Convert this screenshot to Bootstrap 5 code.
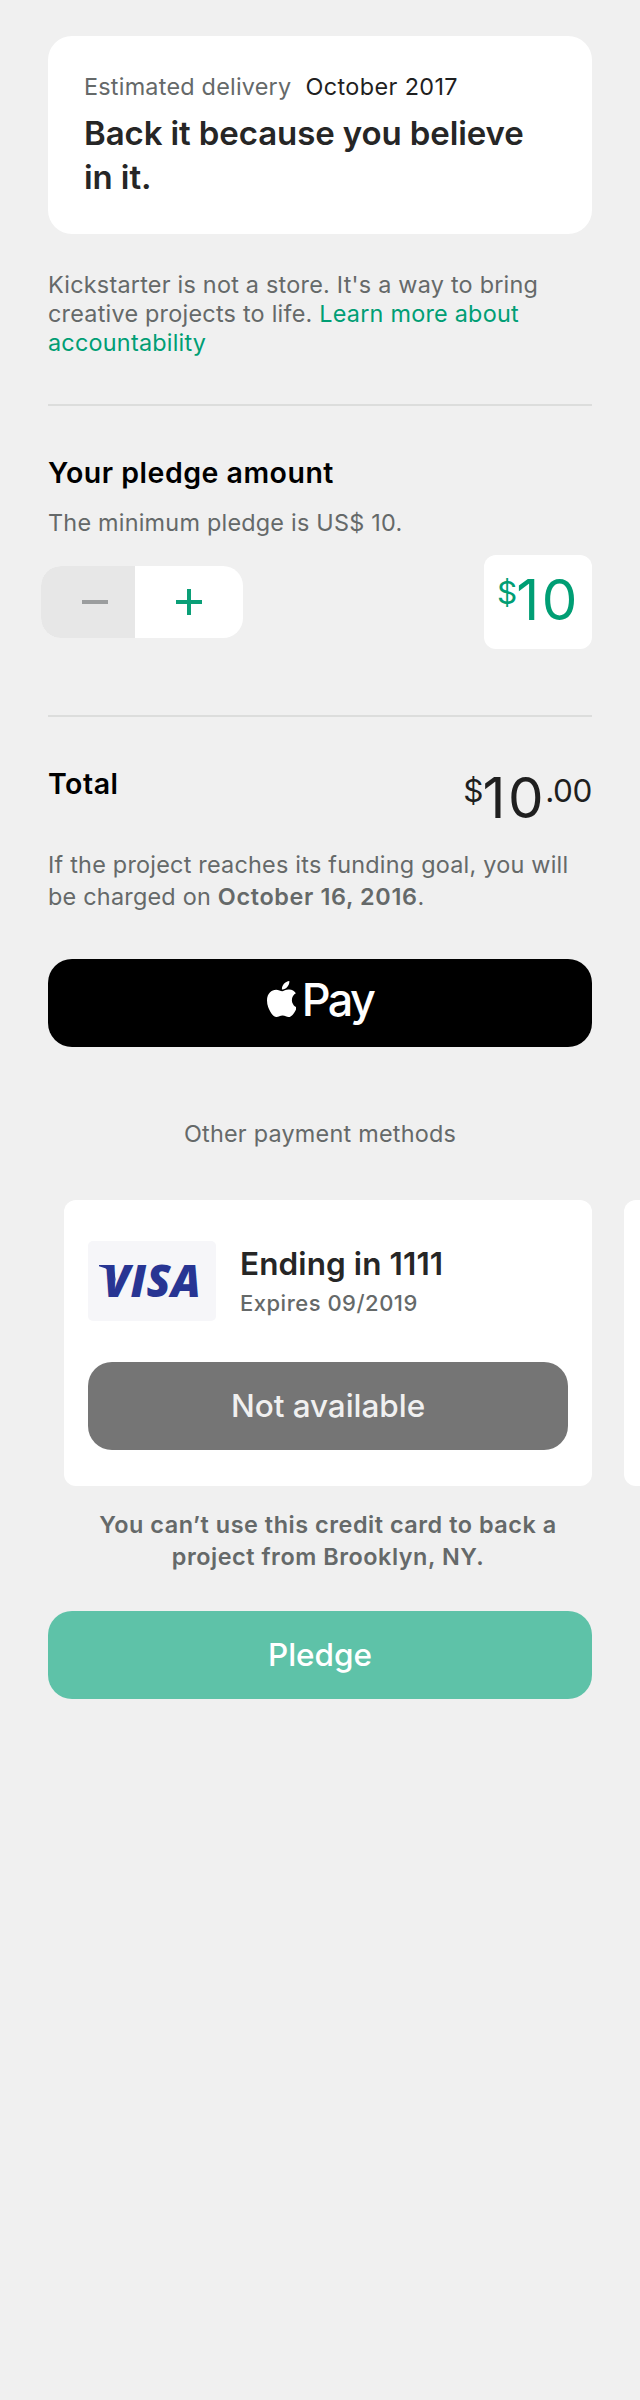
<!DOCTYPE html>
<html lang="en">
<head>
<meta charset="utf-8">
<meta name="viewport" content="width=device-width, initial-scale=1">
<title>Pledge</title>
<link rel="stylesheet" href="https://cdn.jsdelivr.net/npm/bootstrap@5.3.0/dist/css/bootstrap.min.css">
<style>
body{background:#f0f0f0;font-family:Inter,"Liberation Sans",sans-serif;color:#262626;min-height:2400px;overflow-x:hidden}
.page{padding:36px 48px 0}
.copy{font-size:23.4px;line-height:29px;letter-spacing:.23px;color:#656969;white-space:nowrap;margin:0}
.copy-loose{line-height:32px}
.ink{color:#1f1f1f}
.green{color:#009e74}
.reward{height:198px;border-radius:24px;padding:36px}
.reward-date{margin-left:14px;letter-spacing:.4px}
.reward h1{font-size:33px;line-height:44px;font-weight:600;letter-spacing:-.1px;margin:10px 0 0}
.disclaimer{margin-top:36px}
.rule{height:2px;background:#dcdddc}
.rule-first{margin-top:47px}
.rule-second{margin-top:66px}
h2{font-size:28.5px;line-height:34px;font-weight:600;letter-spacing:.5px;color:#000;margin:0}
.section-title{margin-top:50px}
.minimum,.amount-row{margin-top:18px}
.stepper{width:202px;height:72px;margin-left:-7px;border-radius:20px;overflow:hidden}
.stepper button{border:0;padding:0 0 0 41px;background:none;display:flex;align-items:center}
.stepper .step-minus{width:94px;background:#e7e7e7}
.amount-box{width:108px;height:94px;border-radius:12px;padding:17px 0 0 13px}
.fig{font-size:56.5px;line-height:56px;letter-spacing:2.5px;margin-left:-1px}
.sup-fig{font-size:31.5px;line-height:32px;margin-top:5px}
.cents{letter-spacing:-.4px;margin-left:-1px}
.total-row{height:82px;margin-top:50px}
.total-amount{margin-top:3px}
.deadline{letter-spacing:.65px}
.cta{height:88px;border-radius:24px;border:0;font-size:31.5px;line-height:44px;font-weight:500;letter-spacing:-.05px;width:100%;display:flex;align-items:center;justify-content:center;padding:0;color:#fff}
.pay-btn{background:#000;margin-top:46px;gap:6px}
.pay-btn svg{margin-bottom:8px}
.pay-word{font-size:45px;line-height:56px;font-weight:500;letter-spacing:-2.7px;margin-bottom:6px}
.other{margin-top:72px;text-align:center}
.card-strip{margin:52px -48px 0 16px;gap:32px;overflow:hidden}
.pay-card{flex:0 0 528px;height:286px;border-radius:12px;padding:41px 24px 0}
.brand-tile{width:128px;height:80px;border-radius:5px;background:#f6f6f9;position:relative}
.visa-word{position:absolute;left:15px;top:17px;font:italic 800 44px/44px "Open Sans",sans-serif;letter-spacing:.4px;color:#283593}
.visa-flick{position:absolute;left:11px;top:24px}
.card-info{margin-left:24px;padding-top:4px;white-space:nowrap}
.card-end{font-size:31.5px;line-height:37px;font-weight:600;letter-spacing:.1px}
.card-exp{font-size:22px;line-height:30px;font-weight:500;letter-spacing:.5px;color:#656969;margin-top:6px}
.unavailable{margin-top:41px;background:#757575;color:#f0f0f0}
.warning{margin:23px 0 0 16px;text-align:center;font-weight:600;letter-spacing:.54px}
.pledge-btn{margin-top:38px;background:#5ec2a8}
</style>
</head>
<body>
<main class="page">
  <section class="reward bg-white">
    <div class="copy">Estimated delivery<span class="ink reward-date">October 2017</span></div>
    <h1>Back it because you believe<br>in it.</h1>
  </section>
  <p class="copy disclaimer">Kickstarter is not a store. It's a way to bring<br>creative projects to life. <a class="green text-decoration-none">Learn more about<br>accountability</a></p>
  <div class="rule rule-first"></div>

  <h2 class="section-title">Your pledge amount</h2>
  <p class="copy minimum">The minimum pledge is US$ 10.</p>
  <div class="amount-row d-flex justify-content-between align-items-center">
    <div class="stepper d-flex bg-white">
      <button class="step-minus" aria-label="Decrease"><svg width="26" height="26"><path d="M0 13H26" stroke="#9b9d9e" stroke-width="4"/></svg></button>
      <button aria-label="Increase"><svg width="26" height="26"><path d="M0 13H26M13 0V26" stroke="#0a9f77" stroke-width="4"/></svg></button>
    </div>
    <div class="amount-box bg-white d-flex green"><span class="sup-fig">$</span><span class="fig">10</span></div>
  </div>
  <div class="rule rule-second"></div>

  <div class="total-row d-flex justify-content-between">
    <h2>Total</h2>
    <div class="total-amount d-flex ink"><span class="sup-fig">$</span><span class="fig">10</span><span class="sup-fig cents">.00</span></div>
  </div>
  <p class="copy copy-loose">If the project reaches its funding goal, you will<br>be charged on <span class="fw-semibold deadline">October 16, 2016</span>.</p>

  <button class="cta pay-btn">
    <svg width="29" height="36" viewBox="4 32 366.5 448" preserveAspectRatio="none" fill="#fff"><path d="M318.7 268.7c-.2-36.7 16.4-64.4 50-84.8-18.8-26.9-47.2-41.7-84.7-44.6-35.5-2.8-74.3 20.7-88.5 20.7-15 0-49.4-19.7-76.4-19.7C63.3 141.2 4 184.8 4 273.5q0 39.3 14.4 81.2c12.8 36.7 59 126.7 107.2 125.2 25.2-.6 43-17.9 75.8-17.9 31.8 0 48.3 17.9 76.4 17.9 48.6-.7 90.4-82.5 102.6-119.3-65.2-30.7-61.7-90-61.7-91.9zm-56.6-164.2c27.3-32.4 24.8-61.9 24-72.5-24.1 1.4-52 16.4-67.9 34.9-17.5 19.8-27.8 44.3-25.6 71.9 26.1 2 49.9-11.4 69.5-34.2z"/></svg>
    <span class="pay-word">Pay</span>
  </button>
  <p class="copy other">Other payment methods</p>

  <div class="card-strip d-flex">
    <article class="pay-card bg-white">
      <div class="d-flex">
        <div class="brand-tile">
          <svg class="visa-flick" width="20" height="18"><path d="M0 0H14L17 17C14 7 8 3 0 1.2Z" fill="#283593"/></svg>
          <span class="visa-word">VISA</span>
        </div>
        <div class="card-info">
          <div class="card-end">Ending in 1111</div>
          <div class="card-exp">Expires 09/2019</div>
        </div>
      </div>
      <button class="cta unavailable">Not available</button>
    </article>
    <article class="pay-card bg-white"></article>
  </div>
  <p class="copy copy-loose warning">You can’t use this credit card to back a<br>project from Brooklyn, NY.</p>
  <button class="cta pledge-btn">Pledge</button>
</main>
<script src="https://cdn.jsdelivr.net/npm/bootstrap@5.3.0/dist/js/bootstrap.bundle.min.js"></script>
</body>
</html>
